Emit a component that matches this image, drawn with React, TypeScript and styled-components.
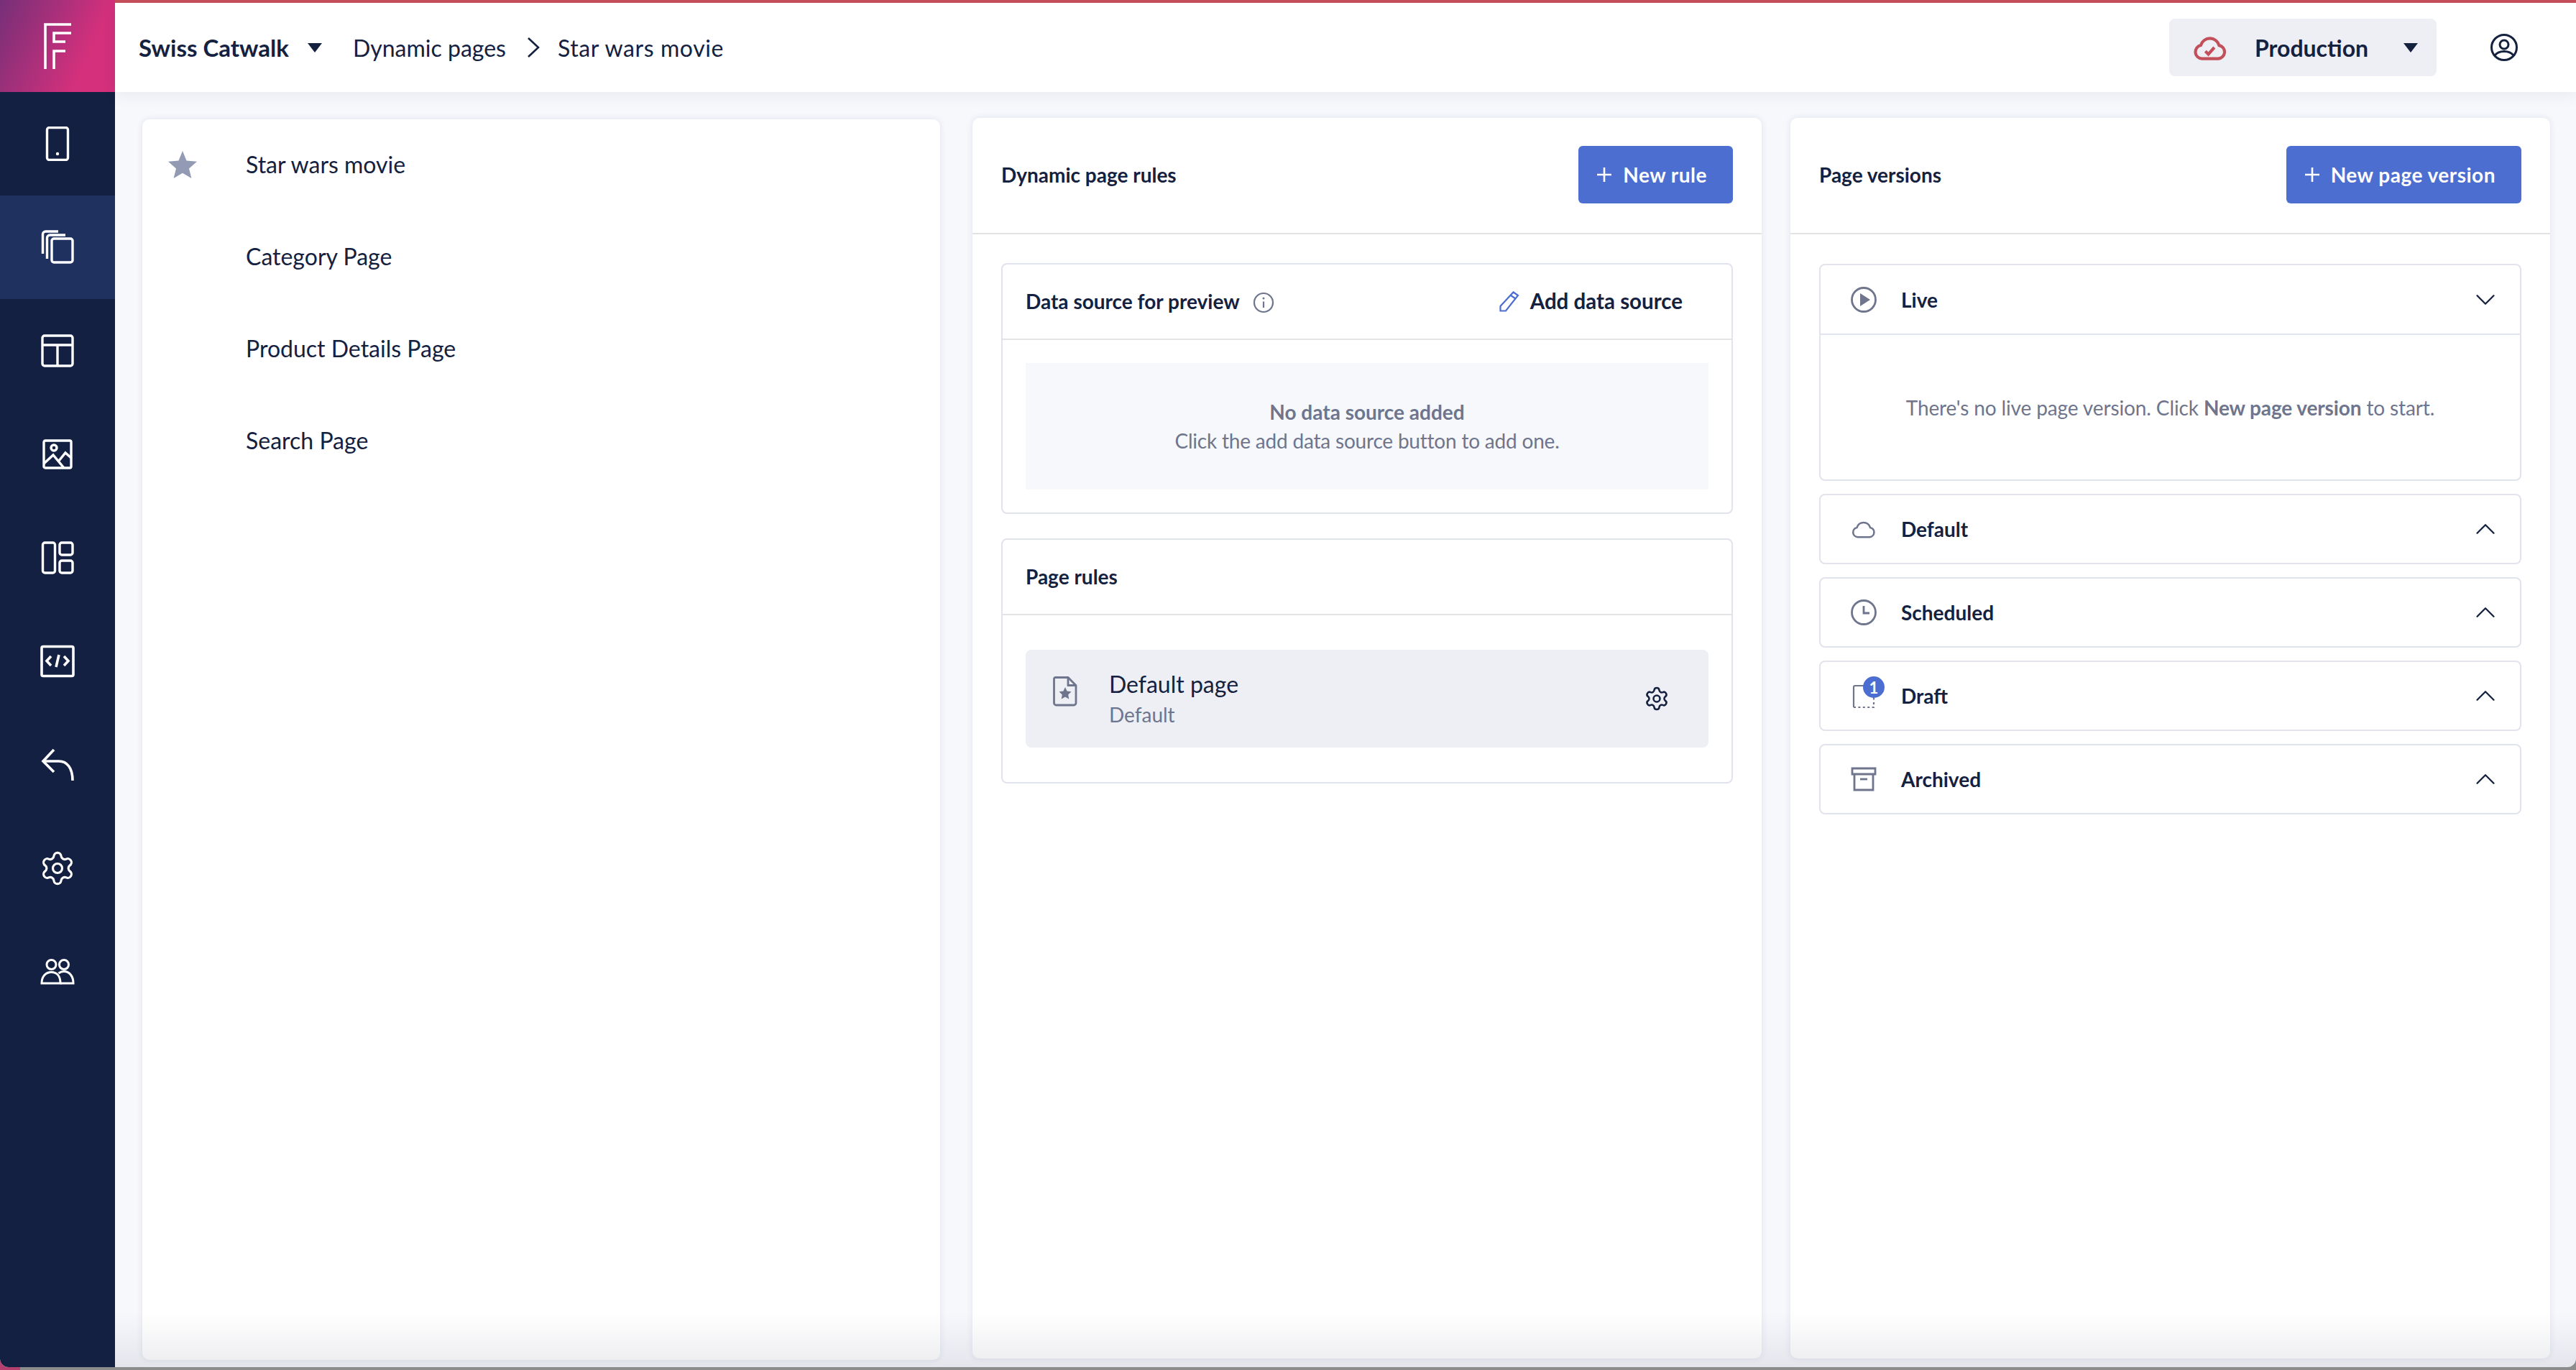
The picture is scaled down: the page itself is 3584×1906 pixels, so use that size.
import React from 'react';
import styled, { createGlobalStyle } from 'styled-components';
import { ChevronDown, ChevronUp, Settings } from 'lucide-react';

const GlobalStyle = createGlobalStyle`
  html, body {
    margin: 0;
    padding: 0;
    overflow: hidden;
  }
  body {
    font-family: Lato, "Noto Sans", sans-serif;
    color: #14213f;
  }
  * {
    box-sizing: border-box;
  }
`;

const NAVY = '#14213f';
const GREY = '#6e758c';
const BLUE = '#4c6ed1';
const RED = '#c24f5a';
const LINE = '#e1e3ed';

const Root = styled.div`
  width: 3584px;
  height: 1906px;
  background: linear-gradient(to right, #b5406f 28px, #8c8c8c 28px);
`;

const Window = styled.div`
  height: 1902px;
  display: flex;
  border-radius: 0 0 12px 12px;
  overflow: hidden;
  background: #f7f8fc;
`;

const Sidebar = styled.nav`
  width: 160px;
  flex-shrink: 0;
  background: #132042;
`;

const LogoBox = styled.div`
  height: 128px;
  background: linear-gradient(115deg, #762f78 0%, #d4307c 72%);
`;

const NavItem = styled.div<{ $active?: boolean }>`
  height: 144px;
  display: flex;
  align-items: center;
  justify-content: center;
  background: ${p => (p.$active ? '#1f315f' : 'transparent')};
  color: #fff;
`;

const Content = styled.div`
  flex: 1;
  min-width: 0;
  display: flex;
  flex-direction: column;
  position: relative;

  &::after {
    content: '';
    position: absolute;
    left: 0;
    right: 0;
    bottom: 0;
    height: 76px;
    pointer-events: none;
    background: linear-gradient(to bottom, rgba(40, 45, 80, 0), rgba(40, 45, 80, 0.09));
  }
`;

const Header = styled.header`
  height: 128px;
  flex-shrink: 0;
  display: flex;
  align-items: center;
  padding: 0 80px 0 33px;
  background: #fff;
  border-top: 4px solid ${RED};
  box-shadow: 0 4px 20px rgba(30, 40, 80, 0.07);
  position: relative;
  z-index: 1;
`;

const Account = styled.div`
  font-size: 33px;
  font-weight: 700;
  width: 298px;
  display: flex;
  align-items: center;
`;

const Caret = styled.span<{ $offset: number }>`
  width: 0;
  height: 0;
  border-left: 10px solid transparent;
  border-right: 10px solid transparent;
  border-top: 13px solid ${NAVY};
  margin-left: ${p => p.$offset}px;
`;

const Crumb = styled.span`
  font-size: 32px;
`;

const CurrentCrumb = styled(Crumb)`
  letter-spacing: 0.6px;
`;

const CrumbSep = styled.span`
  display: flex;
  margin: 0 24px 0 28px;
`;

const HeaderRight = styled.div`
  margin-left: auto;
  display: flex;
  align-items: center;
  gap: 74px;
`;

const EnvPill = styled.div`
  width: 372px;
  height: 80px;
  background: #eeeff5;
  border-radius: 8px;
  display: flex;
  align-items: center;
  padding: 0 26px 0 32px;
`;

const EnvLabel = styled.span`
  font-size: 32px;
  font-weight: 700;
  margin-left: 37px;
  flex: 1;
`;

const Columns = styled.div`
  flex: 1;
  min-height: 0;
  display: flex;
  padding: 36px 36px 12px 38px;
`;

const Panel = styled.section<{ $width: number; $gap?: number }>`
  width: ${p => p.$width}px;
  margin-right: ${p => p.$gap ?? 0}px;
  background: #fff;
  border-radius: 10px;
  box-shadow: 0 0 10px rgba(30, 40, 90, 0.1);
`;

const PagePanel = styled(Panel)`
  margin-top: 2px;
  margin-bottom: -2px;
`;

const PageRow = styled.div`
  height: 128px;
  display: flex;
  align-items: center;
  padding: 0 0 3px 36px;
  font-size: 32px;
`;

const StarSlot = styled.span`
  width: 108px;
  display: flex;
`;

const PanelHead = styled.div`
  height: 162px;
  display: flex;
  align-items: center;
  justify-content: space-between;
  padding: 0 40px 2px 40px;
  border-bottom: 2px solid #e3e3e6;
`;

const PanelTitle = styled.h2`
  margin: 0;
  font-size: 28px;
  font-weight: 700;
`;

const PrimaryButton = styled.button`
  height: 80px;
  border: 0;
  border-radius: 6px;
  background: ${BLUE};
  color: #fff;
  font-family: inherit;
  font-size: 28px;
  font-weight: 700;
  letter-spacing: 0.5px;
  display: flex;
  align-items: center;
  gap: 14px;
  padding: 0 36px 0 24px;
`;

const PanelBody = styled.div`
  padding: 40px 40px 0;
  display: flex;
  flex-direction: column;
  gap: 34px;
`;

const InnerCard = styled.div`
  border: 2px solid ${LINE};
  border-radius: 8px;
`;

const InnerHead = styled.div`
  height: 105px;
  display: flex;
  align-items: center;
  padding: 0 32px 2px;
  border-bottom: 2px solid #e3e3e6;
`;

const InnerTitle = styled.span`
  font-size: 28px;
  font-weight: 700;
`;

const InfoWrap = styled.span`
  display: flex;
  margin-left: 18px;
  margin-top: 4px;
`;

const LinkAction = styled.span`
  margin-left: auto;
  margin-right: 36px;
  display: flex;
  align-items: center;
  gap: 14px;
  font-size: 29.5px;
  font-weight: 700;
`;

const InnerBody = styled.div`
  padding: 32px;
`;

const RulesBody = styled.div`
  padding: 48px 32px;
`;

const EmptyBox = styled.div`
  height: 176px;
  background: #f7f8fc;
  color: ${GREY};
  font-size: 28px;
  line-height: 40px;
  display: flex;
  flex-direction: column;
  align-items: center;
  justify-content: center;
`;

const EmptyTitle = styled.strong`
  font-weight: 700;
`;

const EmptyHint = styled.span`
  letter-spacing: -0.2px;
`;

const RuleRow = styled.div`
  height: 136px;
  background: #eeeff5;
  border-radius: 8px;
  display: flex;
  align-items: center;
  padding: 0 54px 0 38px;
`;

const RuleIcon = styled.span`
  display: flex;
  margin-bottom: 20px;
`;

const RuleText = styled.div`
  margin-left: 44px;
  flex: 1;
`;

const RuleName = styled.div`
  font-size: 32px;
  line-height: 44px;
`;

const RuleKind = styled.div`
  font-size: 28px;
  line-height: 40px;
  color: ${GREY};
`;

const Accordions = styled.div`
  padding: 41px 40px 0;
  display: flex;
  flex-direction: column;
  gap: 18px;
`;

const Accordion = styled.div`
  border: 2px solid ${LINE};
  border-radius: 8px;
`;

const AccordionHead = styled.div<{ $open?: boolean }>`
  height: ${p => (p.$open ? 97 : 94)}px;
  display: flex;
  align-items: center;
  padding: 0 25px 0 42px;
  border-bottom: ${p => (p.$open ? `2px solid ${LINE}` : '0')};
`;

const AccordionIcon = styled.span`
  width: 36px;
  height: 36px;
  display: flex;
  align-items: center;
  justify-content: center;
  position: relative;
  color: ${GREY};
`;

const AccordionTitle = styled.span`
  margin-left: 34px;
  flex: 1;
  font-size: 28px;
  font-weight: 700;
`;

const AccordionBody = styled.div`
  height: 201px;
  display: flex;
  align-items: center;
  justify-content: center;
  color: ${GREY};
  font-size: 28px;
  letter-spacing: -0.12px;
`;

const Badge = styled.span`
  position: absolute;
  top: -9px;
  right: -11px;
  width: 30px;
  height: 30px;
  border-radius: 50%;
  background: ${BLUE};
  color: #fff;
  font-size: 22px;
  font-weight: 700;
  display: flex;
  align-items: center;
  justify-content: center;
`;

const LogoMark = () => (
  <svg width="160" height="128" viewBox="0 0 160 128" fill="none" stroke="#fff" strokeWidth="3.6">
    <path d="M63 96V34H99" />
    <path d="M99 46H75V58H91" />
    <path d="M75 96V71H91" />
  </svg>
);

const CrumbChevron = () => (
  <svg width="20" height="30" viewBox="0 0 20 30" fill="none" stroke={NAVY} strokeWidth="2.6">
    <path d="M3 2L17 15L3 28" />
  </svg>
);

const PhoneIcon = () => (
  <svg width="48" height="48" viewBox="0 0 48 48" fill="none" stroke="currentColor" strokeWidth="3.4">
    <rect x="9.5" y="1.5" width="29" height="45" rx="3" />
    <circle cx="24" cy="38" r="2.2" fill="currentColor" stroke="none" />
  </svg>
);

const PagesIcon = () => (
  <svg width="48" height="48" viewBox="0 0 48 48" fill="none" stroke="currentColor" strokeWidth="3.4">
    <rect x="16" y="12" width="29" height="33" rx="3" />
    <path d="M9.5 40V11a4 4 0 0 1 4-4H35" />
    <path d="M3.5 33V6a4 4 0 0 1 4-4H25" />
  </svg>
);

const LayoutIcon = () => (
  <svg width="48" height="48" viewBox="0 0 48 48" fill="none" stroke="currentColor" strokeWidth="3.4">
    <rect x="3" y="3" width="42" height="42" rx="3" />
    <path d="M3 16H45M24 16V45" />
  </svg>
);

const ImageIcon = () => (
  <svg width="48" height="48" viewBox="0 0 48 48" fill="none" stroke="currentColor" strokeWidth="3.4">
    <rect x="5" y="5" width="38" height="38" rx="2" />
    <circle cx="19" cy="15" r="4" />
    <path d="M5 37L18 25L33 43M26 33L35 22L43 29" />
  </svg>
);

const BlocksIcon = () => (
  <svg width="48" height="48" viewBox="0 0 48 48" fill="none" stroke="currentColor" strokeWidth="3.4">
    <rect x="3.5" y="3" width="17" height="42" rx="3" />
    <rect x="27" y="3" width="18" height="17" rx="3" />
    <rect x="27" y="28" width="18" height="17" rx="3" />
  </svg>
);

const CodeIcon = () => (
  <svg width="48" height="48" viewBox="0 0 48 48" fill="none" stroke="currentColor" strokeWidth="3.6">
    <rect x="2" y="3.5" width="44" height="41" rx="2" />
    <path d="M15 17L9 23.5L15 30M33 17L39 23.5L33 30M26 15L22 32" />
  </svg>
);

const ReplyIcon = () => (
  <svg width="48" height="48" viewBox="0 0 48 48" fill="none" stroke="currentColor" strokeWidth="3.6">
    <path d="M19 3L4 19L19 34" />
    <path d="M4 19H26C37 19 45 28 45 46" />
  </svg>
);

const UsersIcon = () => (
  <svg width="48" height="48" viewBox="0 0 48 48" fill="none" stroke="currentColor" strokeWidth="3">
    <circle cx="15.5" cy="14" r="6.5" />
    <circle cx="33" cy="14" r="6.5" />
    <path d="M2 40C2 30 8 24.5 15.5 24.5C23 24.5 28 30 28 40Z" />
    <path d="M25.5 26C27.5 24.5 30 23.5 33 23.5C40.5 23.5 46 30 46 40H28" />
  </svg>
);

const CloudIcon = ({ size, color, check }: { size: number; color: string; check?: boolean }) => (
  <svg width={size} height={size} viewBox="0 0 24 24" fill="none" stroke={color} strokeWidth={check ? 2 : 1.7}>
    <path d="M6.5 19.5a4.5 4.5 0 0 1-.8-8.9A6.4 6.4 0 0 1 18 10.6a4.5 4.5 0 0 1-.5 8.9Z" />
    {check && <path d="M8.8 14.5l2 2 4-4.5" />}
  </svg>
);

const AvatarIcon = () => (
  <svg width="40" height="40" viewBox="0 0 40 40" fill="none" stroke={NAVY} strokeWidth="3">
    <circle cx="20" cy="20" r="17.5" />
    <circle cx="20" cy="16" r="6" />
    <path d="M7 31C11 26 15 25.5 20 25.5C25 25.5 29 26 33 31" />
  </svg>
);

const StarIcon = () => (
  <svg width="40" height="38" viewBox="0 0 40 38" fill="#929bb3">
    <path d="M20 0L25.5 13.5L40 14.8L29 24.5L32.4 38L20 30.8L7.6 38L11 24.5L0 14.8L14.5 13.5Z" />
  </svg>
);

const InfoIcon = () => (
  <svg width="30" height="30" viewBox="0 0 30 30" fill="none" stroke={GREY} strokeWidth="2.2">
    <circle cx="15" cy="15" r="13" />
    <path d="M15 13.5V22" />
    <circle cx="15" cy="9" r="1.5" fill={GREY} stroke="none" />
  </svg>
);

const PencilIcon = () => (
  <svg width="30" height="30" viewBox="0 0 30 30" fill="none" stroke={BLUE} strokeWidth="2.2">
    <path d="M20.5 2.5L27 7L10 28.5L2.5 28.5L2.5 22Z" />
    <path d="M17 7L23.5 11.5" />
  </svg>
);

const PlusIcon = () => (
  <svg width="24" height="24" viewBox="0 0 24 24" fill="none" stroke="#fff" strokeWidth="2.6">
    <path d="M12 2V22M2 12H22" />
  </svg>
);

const FileStarIcon = () => (
  <svg width="34" height="42" viewBox="0 0 34 42" fill="none" stroke={GREY} strokeWidth="2.8">
    <path d="M3.5 1.5H21L32 12.5V37a3 3 0 0 1-3 3H4.5a3 3 0 0 1-3-3V3.5a2 2 0 0 1 2-2Z" />
    <path d="M21 1.5V12.5H32" />
    <path d="M17 15L19.6 20.6L25.5 21.3L21.2 25.4L22.3 31.5L17 28.5L11.7 31.5L12.8 25.4L8.5 21.3L14.4 20.6Z" fill={GREY} stroke="none" />
  </svg>
);

const PlayIcon = () => (
  <svg width="36" height="36" viewBox="0 0 36 36" fill="none" stroke="currentColor" strokeWidth="2.8">
    <circle cx="18" cy="18" r="16.5" />
    <path d="M13 9L27 18L13 27Z" fill="currentColor" stroke="none" />
  </svg>
);

const ClockIcon = () => (
  <svg width="36" height="36" viewBox="0 0 36 36" fill="none" stroke="currentColor" strokeWidth="2.8">
    <circle cx="18" cy="18" r="16.5" />
    <path d="M18 9V19H26" />
  </svg>
);

const DraftIcon = () => (
  <svg width="32" height="36" viewBox="0 0 32 36" fill="none" stroke="currentColor" strokeWidth="2.2">
    <path d="M2 34V6a2 2 0 0 1 2-2H18" />
    <path d="M2 34H30V16" strokeDasharray="3 3.4" />
  </svg>
);

const ArchiveIcon = () => (
  <svg width="36" height="36" viewBox="0 0 36 36" fill="none" stroke="currentColor" strokeWidth="2.8">
    <path d="M2 3H34V11H2Z" />
    <path d="M5 11V33H31V11" />
    <path d="M13 18H23" />
  </svg>
);

const NAV = [
  <PhoneIcon key="phone" />,
  <PagesIcon key="pages" />,
  <LayoutIcon key="layout" />,
  <ImageIcon key="image" />,
  <BlocksIcon key="blocks" />,
  <CodeIcon key="code" />,
  <ReplyIcon key="reply" />,
  <Settings key="settings" size={52} strokeWidth={1.45} />,
  <UsersIcon key="users" />,
];

const PAGES = ['Star wars movie', 'Category Page', 'Product Details Page', 'Search Page'];

const VERSIONS = [
  { name: 'Default', icon: <CloudIcon size={40} color={GREY} /> },
  { name: 'Scheduled', icon: <ClockIcon /> },
  { name: 'Draft', icon: <DraftIcon />, badge: 1 },
  { name: 'Archived', icon: <ArchiveIcon /> },
];

export default function App() {
  return (
    <Root>
      <GlobalStyle />
      <Window>
        <Sidebar>
          <LogoBox>
            <LogoMark />
          </LogoBox>
          {NAV.map((icon, i) => (
            <NavItem key={i} $active={i === 1}>
              {icon}
            </NavItem>
          ))}
        </Sidebar>
        <Content>
          <Header>
            <Account>
              Swiss Catwalk
              <Caret $offset={26} />
            </Account>
            <Crumb>Dynamic pages</Crumb>
            <CrumbSep>
              <CrumbChevron />
            </CrumbSep>
            <CurrentCrumb>Star wars movie</CurrentCrumb>
            <HeaderRight>
              <EnvPill>
                <CloudIcon size={50} color={RED} check />
                <EnvLabel>Production</EnvLabel>
                <Caret $offset={0} />
              </EnvPill>
              <AvatarIcon />
            </HeaderRight>
          </Header>
          <Columns>
            <PagePanel $width={1110} $gap={45}>
              {PAGES.map((page, i) => (
                <PageRow key={page}>
                  <StarSlot>{i === 0 && <StarIcon />}</StarSlot>
                  {page}
                </PageRow>
              ))}
            </PagePanel>
            <Panel $width={1098} $gap={40}>
              <PanelHead>
                <PanelTitle>Dynamic page rules</PanelTitle>
                <PrimaryButton>
                  <PlusIcon />
                  New rule
                </PrimaryButton>
              </PanelHead>
              <PanelBody>
                <InnerCard>
                  <InnerHead>
                    <InnerTitle>Data source for preview</InnerTitle>
                    <InfoWrap>
                      <InfoIcon />
                    </InfoWrap>
                    <LinkAction>
                      <PencilIcon />
                      Add data source
                    </LinkAction>
                  </InnerHead>
                  <InnerBody>
                    <EmptyBox>
                      <EmptyTitle>No data source added</EmptyTitle>
                      <EmptyHint>Click the add data source button to add one.</EmptyHint>
                    </EmptyBox>
                  </InnerBody>
                </InnerCard>
                <InnerCard>
                  <InnerHead>
                    <InnerTitle>Page rules</InnerTitle>
                  </InnerHead>
                  <RulesBody>
                    <RuleRow>
                      <RuleIcon>
                        <FileStarIcon />
                      </RuleIcon>
                      <RuleText>
                        <RuleName>Default page</RuleName>
                        <RuleKind>Default</RuleKind>
                      </RuleText>
                      <Settings size={36} strokeWidth={1.7} color={NAVY} />
                    </RuleRow>
                  </RulesBody>
                </InnerCard>
              </PanelBody>
            </Panel>
            <Panel $width={1057}>
              <PanelHead>
                <PanelTitle>Page versions</PanelTitle>
                <PrimaryButton>
                  <PlusIcon />
                  New page version
                </PrimaryButton>
              </PanelHead>
              <Accordions>
                <Accordion>
                  <AccordionHead $open>
                    <AccordionIcon>
                      <PlayIcon />
                    </AccordionIcon>
                    <AccordionTitle>Live</AccordionTitle>
                    <ChevronDown size={46} strokeWidth={1.2} color={NAVY} />
                  </AccordionHead>
                  <AccordionBody>
                    <span>
                      There's no live page version. Click <strong>New page version</strong> to start.
                    </span>
                  </AccordionBody>
                </Accordion>
                {VERSIONS.map(v => (
                  <Accordion key={v.name}>
                    <AccordionHead>
                      <AccordionIcon>
                        {v.icon}
                        {v.badge && <Badge>{v.badge}</Badge>}
                      </AccordionIcon>
                      <AccordionTitle>{v.name}</AccordionTitle>
                      <ChevronUp size={46} strokeWidth={1.2} color={NAVY} />
                    </AccordionHead>
                  </Accordion>
                ))}
              </Accordions>
            </Panel>
          </Columns>
        </Content>
      </Window>
    </Root>
  );
}
